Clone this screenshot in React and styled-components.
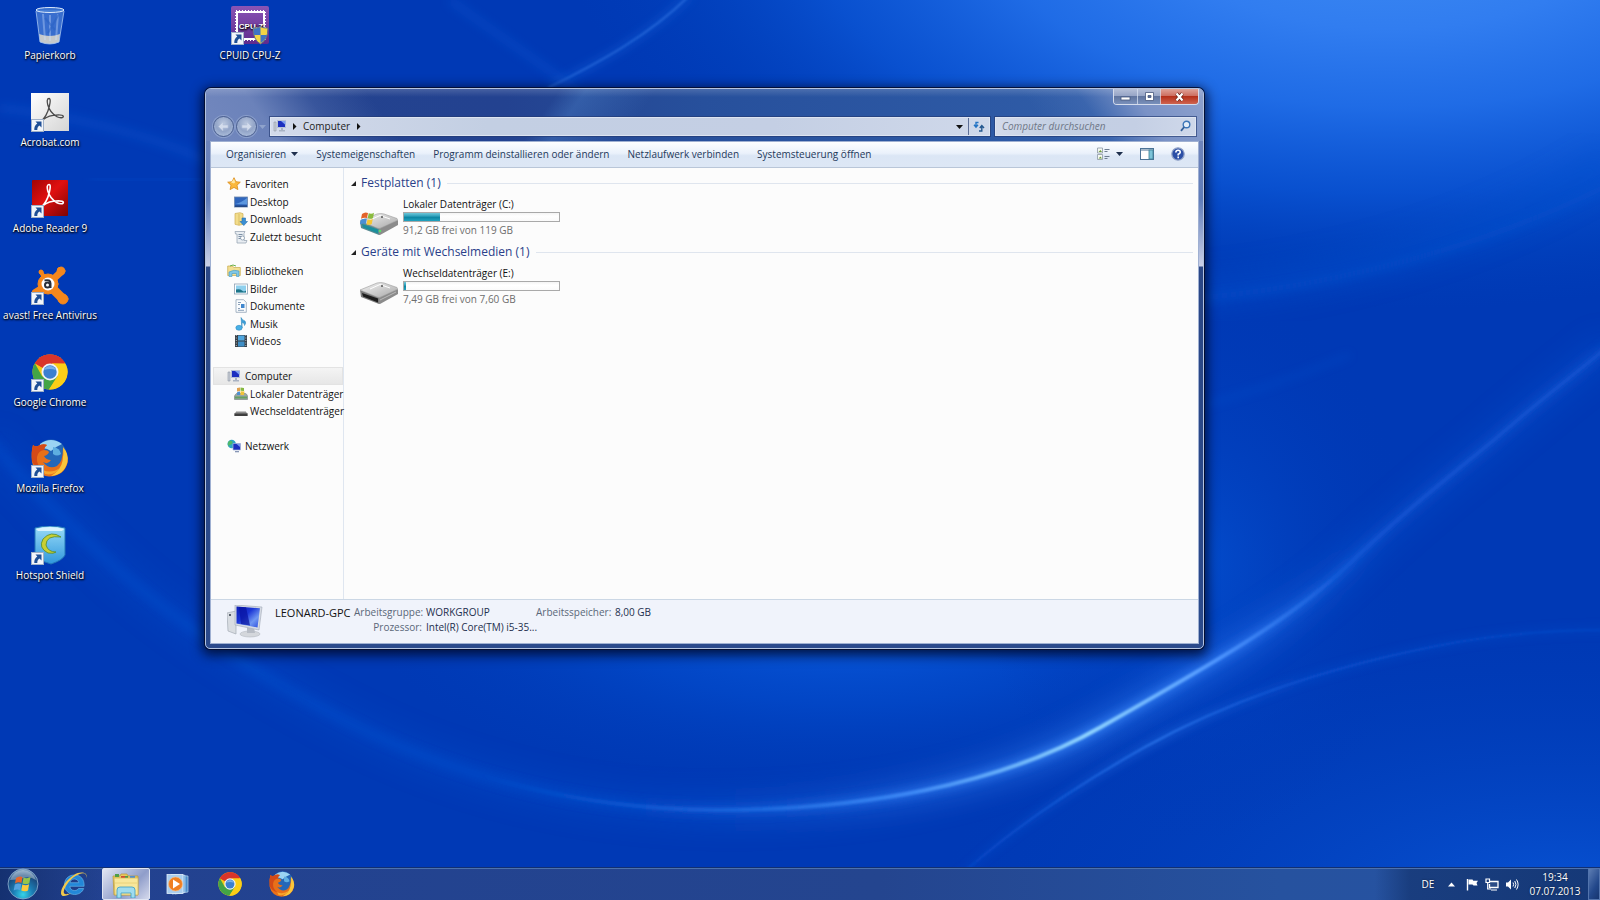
import React from "react";
import styled, { createGlobalStyle, css } from "styled-components";

const GlobalStyle = createGlobalStyle`
  *, *::before, *::after { box-sizing: border-box; }
  html, body { margin: 0; padding: 0; background: #0038b4; }
  body, button, input {
    font-family: "Open Sans", "Noto Sans", "Liberation Sans", sans-serif;
    font-size: 10px;
    line-height: 14px;
  }
  button { margin: 0; padding: 0; border: 0; background: none; color: inherit; cursor: default; }
  a { color: inherit; text-decoration: none; }
  ul, dl, dd, dt, h1, h2, p { margin: 0; padding: 0; list-style: none; font-weight: 400; }
  svg { display: block; flex: none; }
`;

/* ---------- page ---------- */

const Screen = styled.div`
  position: relative;
  isolation: isolate;
  display: grid;
  grid-template-rows: 1fr 33px;
  min-height: 100vh;
  overflow: hidden;
`;

const WallpaperArt = styled.svg`
  position: absolute;
  inset: 0;
  width: 100%;
  height: 100%;
  z-index: -1;
`;

const Desktop = styled.main`
  position: relative;
  display: grid;
`;

const IconGrid = styled.ul`
  display: grid;
  grid-template-rows: repeat(10, 1fr);
  grid-auto-columns: 100px;
`;

const IconCell = styled.li`
  grid-column: ${(p) => p.$col};
  grid-row: ${(p) => p.$row};
  display: flex;
  justify-content: center;
  align-items: flex-start;
  padding-top: 6px;
`;

const Shortcut = styled.button`
  display: flex;
  flex-direction: column;
  align-items: center;
  gap: 2px;
  color: #fff;
  line-height: 16px;
  white-space: nowrap;
  text-shadow: 0 1px 2px #000, 1px 1px 2px rgba(0, 0, 0, 0.8);
`;

/* ---------- window ---------- */

const Frame = styled.section`
  position: absolute;
  inset: 88px 396px 218px 205px;
  display: flex;
  flex-direction: column;
  padding: 0 4px 4px;
  border: 1px solid #b4c3df;
  border-radius: 6px 6px 5px 5px;
  background: linear-gradient(to bottom, #6f84b8 0, #6c83bb 60px, #5f7cb9 110px, #c9cfe6 177px, #2b4786 178px, #2b4a8c 100%);
  box-shadow: 0 0 0 1px rgba(3, 12, 44, 0.85), 0 3px 12px 3px rgba(0, 5, 30, 0.8);
`;

const TitleArea = styled.header`
  display: flex;
  flex-direction: column;
  height: 52px;
  margin: 0 -4px;
  padding: 0 4px 3px;
  border-radius: 5px 5px 0 0;
  background:
    linear-gradient(to bottom, rgba(255, 255, 255, 0.16), rgba(255, 255, 255, 0) 8px),
    linear-gradient(55deg, #7388be 0, #6b82ba 60px, rgba(70, 98, 165, 0.6) 110px, rgba(36, 67, 143, 0) 160px),
    linear-gradient(235deg, #8ea1cd 0, #7a92c6 60px, rgba(70, 110, 180, 0.5) 105px, rgba(50, 96, 171, 0) 150px),
    linear-gradient(125deg, rgba(70, 130, 200, 0) 290px, rgba(80, 135, 205, 0.35) 312px, rgba(60, 110, 190, 0) 370px),
    linear-gradient(to right, #24438f 0, #234290 30%, #27509c 50%, #3260ab 100%);
`;

const CaptionRow = styled.div`
  display: flex;
  justify-content: flex-end;
  align-items: flex-start;
  height: 25px;
`;

const Caption = styled.div`
  display: flex;
  height: 16px;
  border: 1px solid #d5dcec;
  border-top: 0;
  border-radius: 0 0 4px 4px;
  overflow: hidden;
`;

const CaptionButton = styled.button`
  display: grid;
  place-items: center;
  width: ${(p) => (p.$close ? 38 : 23)}px;
  border-left: 1px solid rgba(215, 224, 242, 0.75);
  background: linear-gradient(to bottom, #b5bfd8 0, #97a5c6 45%, #61759f 50%, #7990bb 100%);
  &:first-child { border-left: 0; }
  ${(p) =>
    p.$close &&
    css`
      background: linear-gradient(to bottom, #dfa398 0, #cd6f61 45%, #b5301a 50%, #cf6450 100%);
    `}
`;

const NavRow = styled.div`
  display: flex;
  align-items: center;
  gap: 5px;
  height: 24px;
  padding: 0 3px;
`;

const History = styled.div`
  display: flex;
  align-items: center;
  gap: 2px;
  width: 52px;
`;

const RoundButton = styled.button`
  display: grid;
  place-items: center;
  flex: none;
  width: 21px;
  height: 21px;
  border: 1px solid #4d6190;
  border-radius: 50%;
  background: radial-gradient(circle at 50% 35%, #bcc9df 0, #93a5c8 50%, #a9bbd9 80%, #8497bf 100%);
  box-shadow: 0 0 0 1px rgba(190, 205, 232, 0.35);
`;

const fieldSkin = css`
  display: flex;
  align-items: stretch;
  height: 19px;
  border: 1px solid #dde4f1;
  background: linear-gradient(to right, #d3daea, #c3cfe3 30%, #c4cfe4 70%, #cfd8ea);
  box-shadow: 0 0 0 1px rgba(35, 58, 115, 0.65);
`;

const AddressBar = styled.nav`
  ${fieldSkin}
  flex: 1;
  align-items: center;
  padding-left: 2px;
  color: #1b1b1b;
`;

const Crumb = styled.button`
  display: flex;
  align-items: center;
  gap: 5px;
  padding: 0 4px;
  color: #222;
`;

const AddressEnd = styled.button`
  display: grid;
  place-items: center;
  width: ${(p) => p.$w}px;
  height: 17px;
  ${(p) => p.$push && "margin-left: auto;"}
  ${(p) => p.$ruled && "border-left: 1px solid #5d6f97;"}
`;

const SearchBox = styled.label`
  ${fieldSkin}
  flex: 0 0 201px;
  align-items: center;
  padding: 0 4px 0 6px;
`;

const SearchInput = styled.input`
  flex: 1;
  min-width: 0;
  padding: 0;
  border: 0;
  outline: 0;
  background: transparent;
  font-style: italic;
  &::placeholder { color: #6f7787; opacity: 1; }
`;

const Client = styled.div`
  flex: 1;
  display: flex;
  flex-direction: column;
  min-height: 0;
  border: 1px solid #9fb0d2;
  background: #fcfcfc;
`;

const CommandBar = styled.div`
  display: flex;
  align-items: center;
  gap: 18px;
  height: 26px;
  padding: 0 13px 2px 15px;
  border-bottom: 1px solid #b9c6d8;
  background: linear-gradient(to bottom, #fdfeff 0, #eaf1fb 45%, #dbe6f5 55%, #dde7f5 100%);
  color: #1e395b;
  white-space: nowrap;
`;

const Command = styled.button`
  display: flex;
  align-items: center;
  gap: 5px;
`;

const CommandTools = styled.div`
  display: flex;
  align-items: center;
  gap: 17px;
  margin-left: auto;
`;

const Body = styled.div`
  flex: 1;
  display: flex;
  min-height: 0;
`;

/* ---------- navigation pane ---------- */

const Tree = styled.nav`
  display: flex;
  flex-direction: column;
  gap: 17px;
  flex: none;
  width: 133px;
  padding: 7px 0 0 2px;
  border-right: 1px solid #dfe6f0;
`;

const Branch = styled.ul`
  display: flex;
  flex-direction: column;
`;

const Leaf = styled.li`
  height: 17px;
  padding-left: ${(p) => (p.$root ? 14 : 21)}px;
  &:nth-child(odd) { height: 18px; }
  ${(p) =>
    p.$selected &&
    css`
      background: linear-gradient(to bottom, #f5f5f5, #e6e6e6);
      box-shadow: inset 0 0 0 1px #e3e3e3;
    `}
`;

const LeafLink = styled.a`
  display: flex;
  align-items: center;
  gap: ${(p) => (p.$root ? 4 : 2)}px;
  height: 100%;
  color: #111;
  white-space: nowrap;
`;

/* ---------- drive list ---------- */

const Content = styled.div`
  flex: 1;
  padding: 6px 5px 0 7px;
`;

const GroupHead = styled.h2`
  display: flex;
  align-items: center;
  gap: 6px;
  height: 18px;
  &::after {
    content: "";
    flex: 1;
    height: 1px;
    background: #dfe5ee;
  }
`;

const GroupToggle = styled.button`
  display: flex;
  align-items: center;
  gap: 3px;
  color: #2a3f8a;
  font-size: 12px;
  line-height: 18px;
`;

const Drive = styled.article`
  display: flex;
  align-items: flex-end;
  gap: 5px;
  padding: 5px 0 6px 9px;
`;

const DriveText = styled.div`
  display: flex;
  flex-direction: column;
  gap: 1px;
  width: 157px;
  color: #111;
  white-space: nowrap;
`;

const Meter = styled.div`
  height: 10px;
  border: 1px solid #a9a9a9;
  background: linear-gradient(to bottom, #f4f4f4, #fff 40%, #fafafa);
`;

const MeterFill = styled.div`
  height: 100%;
  background: linear-gradient(to bottom, #6ec6d8 0, #35a5bf 35%, #0d86a3 55%, #21a3bf 100%);
`;

const Muted = styled.p`
  color: #6d6d6d;
`;

/* ---------- details pane ---------- */

const Details = styled.footer`
  display: flex;
  gap: 12px;
  height: 44px;
  padding: 5px 16px 0;
  border-top: 1px solid #cbd7e5;
  background: #f0f3fb;
`;

const Facts = styled.dl`
  display: grid;
  grid-template-columns: 75px 68px 106px 75px auto;
  grid-template-rows: 15px 15px;
  column-gap: 4px;
  line-height: 15px;
  white-space: nowrap;
`;

const MachineName = styled.div`
  color: #111;
  font-size: 11px;
`;

const FactLabel = styled.dt`
  grid-column: ${(p) => p.$col};
  grid-row: ${(p) => p.$row};
  text-align: right;
  color: #5a6779;
`;

const FactValue = styled.dd`
  grid-column: ${(p) => p.$col};
  grid-row: ${(p) => p.$row};
  color: #1e2f4d;
`;

/* ---------- taskbar ---------- */

const Taskbar = styled.footer`
  display: flex;
  align-items: stretch;
  gap: 4px;
  border-top: 1px solid #123072;
  background:
    linear-gradient(to right, rgba(12, 38, 92, 0.6) 0, rgba(12, 38, 92, 0) 100px),
    linear-gradient(to left, rgba(18, 52, 112, 0.85) 0, rgba(22, 56, 118, 0.8) 190px, rgba(22, 56, 118, 0) 225px),
    linear-gradient(to right, #224190 0, #24458f 55%, #26529f 80%, #2653a3 100%);
  box-shadow: inset 0 1px 0 #4d72ae;
`;

const TaskButton = styled.button`
  display: grid;
  place-items: center;
  width: ${(p) => (p.$start ? 46 : 48)}px;
  ${(p) =>
    p.$active &&
    css`
      border: 1px solid #dfe5f3;
      border-radius: 2px;
      background: linear-gradient(135deg, #e2e6f2 0, #b0bbdb 35%, #8f9dca 60%, #d4d9ec 100%);
    `}
`;

const Tray = styled.div`
  display: flex;
  align-items: center;
  margin-left: auto;
  color: #fff;
`;

const TrayButton = styled.button`
  display: grid;
  place-items: center;
  width: ${(p) => p.$w}px;
  height: 28px;
  text-shadow: 0 0 2px rgba(0, 0, 0, 0.6);
`;

const ShowDesktop = styled.button`
  width: 12px;
  align-self: stretch;
  border: 1px solid #5274ad;
  background: linear-gradient(120deg, #5d7db3, #23488b 60%, #16356f);
`;

/* ---------- drawings ---------- */

const MAIN_ARC =
  "M-10 440 C40 500 70 525 115 567 C190 634 270 682 344 720 C430 765 560 810 718 810 C860 810 1000 785 1101 727 C1210 665 1290 620 1346 567 C1400 515 1445 480 1494 440 C1540 400 1570 378 1610 345";
const LOW_ARC = "M950 885 C1000 838 1060 795 1145 747 C1230 700 1330 665 1458 642 C1510 633 1560 630 1610 630";

function Wallpaper() {
  return (
    <WallpaperArt viewBox="0 0 1600 900" preserveAspectRatio="none" aria-hidden="true">
      <defs>
        <radialGradient id="sky" gradientUnits="userSpaceOnUse" cx="0" cy="0" r="1" gradientTransform="translate(1390 -80) scale(830 390)">
          <stop offset="0" stopColor="#3f8cf2" />
          <stop offset=".28" stopColor="#317df0" />
          <stop offset=".48" stopColor="#2270ea" stopOpacity=".92" />
          <stop offset=".7" stopColor="#0c58d8" stopOpacity=".75" />
          <stop offset=".86" stopColor="#0349c6" stopOpacity=".4" />
          <stop offset="1" stopColor="#0040bc" stopOpacity="0" />
        </radialGradient>
        <radialGradient id="pool" gradientUnits="userSpaceOnUse" cx="0" cy="0" r="1" gradientTransform="translate(850 620) scale(480 170)">
          <stop offset="0" stopColor="#0a5ade" />
          <stop offset=".5" stopColor="#034ed0" stopOpacity=".6" />
          <stop offset="1" stopColor="#0040bc" stopOpacity="0" />
        </radialGradient>
        <radialGradient id="corner" gradientUnits="userSpaceOnUse" cx="0" cy="0" r="1" gradientTransform="translate(1560 900) scale(620 260)">
          <stop offset="0" stopColor="#0853d4" />
          <stop offset="1" stopColor="#0040bc" stopOpacity="0" />
        </radialGradient>
        <radialGradient id="side" gradientUnits="userSpaceOnUse" cx="0" cy="0" r="1" gradientTransform="translate(1200 560) scale(220 280)">
          <stop offset="0" stopColor="#034bcb" />
          <stop offset="1" stopColor="#0038b6" stopOpacity="0" />
        </radialGradient>
        <linearGradient id="arcGlow" gradientUnits="userSpaceOnUse" x1="0" y1="0" x2="1600" y2="0">
          <stop offset="0" stopColor="#0754d4" stopOpacity=".5" />
          <stop offset=".4" stopColor="#0a58d8" stopOpacity=".6" />
          <stop offset=".56" stopColor="#2a74ec" />
          <stop offset=".68" stopColor="#3f8dff" />
          <stop offset=".78" stopColor="#2f78f2" />
          <stop offset=".87" stopColor="#0a58d8" stopOpacity=".7" />
          <stop offset="1" stopColor="#0a58d8" stopOpacity=".7" />
        </linearGradient>
        <linearGradient id="arcCore" gradientUnits="userSpaceOnUse" x1="0" y1="0" x2="1600" y2="0">
          <stop offset=".3" stopColor="#1562dc" stopOpacity="0" />
          <stop offset=".45" stopColor="#1b69e0" stopOpacity=".7" />
          <stop offset=".57" stopColor="#3d88f5" />
          <stop offset=".68" stopColor="#8fd4ff" />
          <stop offset=".76" stopColor="#4f96ff" />
          <stop offset=".84" stopColor="#1e66e4" stopOpacity=".3" />
          <stop offset="1" stopColor="#1562dc" stopOpacity=".3" />
        </linearGradient>
        <linearGradient id="lowCore" gradientUnits="userSpaceOnUse" x1="950" y1="0" x2="1600" y2="0">
          <stop offset="0" stopColor="#0e5ade" stopOpacity=".3" />
          <stop offset=".32" stopColor="#3380f5" />
          <stop offset=".55" stopColor="#1660e0" stopOpacity=".6" />
          <stop offset="1" stopColor="#0a54d2" stopOpacity=".5" />
        </linearGradient>
        <filter id="wide" x="-10%" y="-20%" width="120%" height="140%"><feGaussianBlur stdDeviation="14" /></filter>
        <filter id="mid" x="-10%" y="-20%" width="120%" height="140%"><feGaussianBlur stdDeviation="5" /></filter>
        <filter id="fine" x="-10%" y="-20%" width="120%" height="140%"><feGaussianBlur stdDeviation="1" /></filter>
      </defs>
      <rect width="1600" height="900" fill="#0039b5" />
      <rect width="1600" height="900" fill="url(#pool)" />
      <rect width="1600" height="900" fill="url(#corner)" />
      <rect width="1600" height="900" fill="url(#side)" />
      <rect width="1600" height="900" fill="url(#sky)" />
      <g fill="none">
        <path d="M1180 294 C1350 280 1500 232 1610 160" stroke="#0650cc" strokeWidth="26" opacity=".5" filter="url(#wide)" />
        <path d="M1180 300 C1350 286 1500 240 1610 184" stroke="#0a54d0" strokeWidth="7" opacity=".4" filter="url(#mid)" />
        <path d="M1200 406 C1260 390 1300 375 1350 355" stroke="#0a54d0" strokeWidth="4" opacity=".4" filter="url(#mid)" />
        <path d="M690 -5 C650 35 600 62 548 88" stroke="#1a66e0" strokeWidth="7" opacity=".4" filter="url(#mid)" />
        <path d="M690 -5 C650 35 600 62 548 88" stroke="#3c84ee" strokeWidth="2" opacity=".5" filter="url(#fine)" />
        <path d="M450 0 C490 30 530 55 590 100" stroke="#0e5ad6" strokeWidth="9" opacity=".3" filter="url(#mid)" />
        <path d="M0 108 C70 115 150 135 205 160" stroke="#0c58d2" strokeWidth="9" opacity=".35" filter="url(#mid)" />
        <path d="M90 179 L205 180" stroke="#0c58d2" strokeWidth="4" opacity=".4" filter="url(#mid)" />
        <path d={MAIN_ARC} stroke="url(#arcGlow)" strokeWidth="24" opacity=".5" filter="url(#wide)" />
        <path d={MAIN_ARC} stroke="url(#arcGlow)" strokeWidth="9" opacity=".7" filter="url(#mid)" />
        <path d={MAIN_ARC} stroke="url(#arcCore)" strokeWidth="4" filter="url(#fine)" />
        <path d={LOW_ARC} stroke="url(#lowCore)" strokeWidth="6" opacity=".5" filter="url(#mid)" />
        <path d={LOW_ARC} stroke="url(#lowCore)" strokeWidth="2" opacity=".8" filter="url(#fine)" />
      </g>
    </WallpaperArt>
  );
}

function LinkBadge() {
  return (
    <g>
      <rect x=".5" y="26.5" width="12" height="12" fill="#f2f5fa" stroke="#9fb0c8" />
      <path d="M4.500 28.500h6v6l-2-2c-1.500 1-2.300 2.300-2.200 4.500h-3c-.2-3 .8-5 3-6.600z" fill="#1f4f96" />
    </g>
  );
}

function Pict({ children, badge = true }) {
  return (
    <svg width="38" height="39" viewBox="0 0 38 39" aria-hidden="true">
      {children}
      {badge && <LinkBadge />}
    </svg>
  );
}

const BinIcon = () => (
  <Pict badge={false}>
    <path d="M5 4 L9 36 Q19 40 28 36 L33 4 Z" fill="#7fb0ee" fillOpacity=".45" />
    <path d="M8 28 L9 36 Q19 40 28 36 L29 28 Q19 32 8 28Z" fill="#d6d3cb" fillOpacity=".9" />
    <path d="M12 8 L14 34 M19 9V35 M27 8 L25 34" stroke="#cfe3ff" strokeWidth="2" strokeOpacity=".35" />
    <path d="M28 8 L17 27 M24 24 L14 12" stroke="#2b62c4" strokeWidth="2" strokeOpacity=".6" />
    <ellipse cx="19" cy="4" rx="14" ry="2.500" fill="#4f86d8" fillOpacity=".7" stroke="#dbe9fb" />
    <path d="M5 5 L9 36 Q19 40 28 36 L33 5" fill="none" stroke="#a9c8f2" strokeOpacity=".8" />
  </Pict>
);

const TRISKELE =
  "M18 5.500c-2 0-2.200 3-1.200 6.500C18.300 17.200 22 21.500 26 23.700c3 1.600 6.800 1.300 6.300-.4c-.5-1.500-6-1.500-10-1C17 23 12.500 25.500 9 29.500M18 5.500c1.800 0 1.300 4 .3 8C17 19 13.500 25.500 9.500 29";

const AcrobatIcon = () => (
  <Pict>
    <defs>
      <linearGradient id="paper" x1="0" y1="0" x2="1" y2="1">
        <stop offset="0" stopColor="#fff" /><stop offset="1" stopColor="#d5d5d5" />
      </linearGradient>
    </defs>
    <rect width="38" height="38" fill="url(#paper)" />
    <path d={TRISKELE} fill="none" stroke="#4c4c4c" strokeWidth="1.300" />
  </Pict>
);

const ReaderIcon = () => (
  <Pict>
    <defs>
      <linearGradient id="rd" x1="0" y1="0" x2="1" y2="1">
        <stop offset="0" stopColor="#a00505" /><stop offset=".45" stopColor="#e01010" /><stop offset="1" stopColor="#7d0404" />
      </linearGradient>
    </defs>
    <rect x="1" y="1" width="36" height="36" rx="1" fill="url(#rd)" />
    <path d={TRISKELE} fill="none" stroke="#fff" strokeWidth="1.600" />
  </Pict>
);

const AvastIcon = () => (
  <Pict>
    <g stroke="#f5871c" strokeLinecap="round" fill="#f5871c">
      <path d="M17 18 L30 6" strokeWidth="7" />
      <path d="M17 18 L10 6" strokeWidth="4" />
      <path d="M17 18 L32 33" strokeWidth="9" />
      <path d="M17 18 L4 26" strokeWidth="6" />
      <circle cx="30" cy="5" r="4" /><circle cx="10" cy="6" r="2" /><circle cx="32" cy="33" r="5" /><circle cx="17" cy="18" r="10" />
    </g>
    <circle cx="17" cy="18" r="6.500" fill="#fff" />
    <circle cx="16.500" cy="19" r="2.500" fill="none" stroke="#2a2f3a" strokeWidth="2" />
    <path d="M13.500 14.500q6-1.500 6 3v4.500" fill="none" stroke="#2a2f3a" strokeWidth="2" />
  </Pict>
);

function ChromeArt() {
  return (
    <g>
      <circle cx="18" cy="18" r="17.500" fill="#f6c915" />
      <path d="M18 18 L2.850 9.250 A17.500 17.500 0 0 1 33.150 9.250 Z" fill="#d9352a" />
      <path d="M18 9 H33.200 A17.500 17.500 0 0 0 3 9.250 L10.200 13.500 Z" fill="#d9352a" />
      <path d="M2.850 9.250 A17.500 17.500 0 0 0 17 35.500 L25.500 22 L10.200 22.500 Z" fill="#43a446" />
      <path d="M25.800 22.500 L17 35.500 A17.500 17.500 0 0 0 33.300 9.500 L20 9.200Z" fill="#fbce17" />
      <circle cx="18" cy="18" r="8.500" fill="#f1f3f5" />
      <circle cx="18" cy="18" r="6.700" fill="#3b7fd0" />
      <path d="M12 16a6.500 6.500 0 0 1 12 0q-6-2-12 0z" fill="#78b0ea" />
    </g>
  );
}

function FirefoxArt() {
  return (
    <g>
      <circle cx="20" cy="16" r="15.500" fill="#2467b8" />
      <path d="M9 5 Q20-3 31 5 Q24 8 20 12 Q14 8 9 10Z" fill="#9bd4f3" />
      <path d="M22 8q7 1 8 7q-4 3-8 0z" fill="#5eaee0" />
      <path d="M2 6 Q4 8 7 7 Q12 4 16 6 Q13 8 13 11 Q17 11 18 13 Q17 16 13 17 Q15 21 20 21 Q17 26 12 23 Q18 31 26 27 Q32 23 32 9 Q38 16 36.500 24 Q33 37 18 37.500 Q4 36 1 23 Q0 13 2 6Z" fill="#e8701a" />
      <path d="M32 8 Q38 15 36.500 23 Q33 36 20 37 Q30 31 31.500 22 Q33 15 32 8Z" fill="#f9c63c" />
      <path d="M12 31 Q20 35 29 29 Q24 37 14 35Z" fill="#f7a52c" />
      <path d="M2 6 Q4 8 7 7 Q12 4 16 6 Q13 8 13 11 Q7 12 6 18 Q5 26 12 31 Q4 29 1 22 Q0 13 2 6Z" fill="#d44a17" />
    </g>
  );
}

const ChromeIcon = () => <Pict><g transform="translate(1 1)"><ChromeArt /></g></Pict>;
const FirefoxIcon = () => <Pict><FirefoxArt /></Pict>;

const HotspotIcon = () => (
  <Pict>
    <defs>
      <linearGradient id="hs" x1="0" y1="0" x2="0" y2="1">
        <stop offset="0" stopColor="#9bdcf8" /><stop offset="1" stopColor="#2f97dc" />
      </linearGradient>
    </defs>
    <path d="M4 2 Q19-2 34 2 V29 Q32 34 20 38 Q6 34 4 28Z" fill="url(#hs)" stroke="#2377b8" />
    <path d="M5 3 Q19-1 33 3 L31 5 H7Z" fill="#d8f2fd" />
    <path d="M30 11 Q20 4 12 13 Q7 22 17 27 Q23 28 25 26 Q17 26 15 19 Q15 9 30 11Z" fill="#c9cf33" stroke="#538a2d" strokeWidth=".8" />
  </Pict>
);

const CpuzIcon = () => (
  <Pict>
    <defs>
      <linearGradient id="cz" x1="0" y1="0" x2="0" y2="1">
        <stop offset="0" stopColor="#8a55b5" /><stop offset="1" stopColor="#5f2a8d" />
      </linearGradient>
    </defs>
    <rect width="38" height="38" rx="2" fill="url(#cz)" />
    <rect x="6" y="6" width="27" height="27" fill="none" stroke="#fff" strokeWidth="2" />
    <rect x="5" y="5" width="29" height="29" fill="none" stroke="#fff" strokeWidth="2" strokeDasharray="1 2" />
    <text x="20" y="23" textAnchor="middle" fontFamily="Liberation Sans, sans-serif" fontSize="8" fontWeight="700" fill="#fff">CPU-Z</text>
    <path d="M22 22q7 0 7.500-2q.5 2 7.500 2q0 12-7.500 16q-7.500-4-7.500-16z" fill="#f4d545" stroke="#5b6b86" />
    <path d="M29.500 20.500q-.5 1.500-7 2q0 3 .7 6.500h6.300zM29.500 29v8q5-3 6.500-8z" fill="#3f74c4" />
  </Pict>
);

function SmallIcon({ children }) {
  return <svg width="14" height="14" viewBox="0 0 14 14" aria-hidden="true">{children}</svg>;
}

const PcSmall = () => (
  <SmallIcon>
    <path d="M1 3h2v9H1z" fill="#c9ced6" stroke="#8e97a6" strokeWidth=".6" />
    <path d="M4.500 1.500h8v7h-8z" fill="#1c2fc0" stroke="#b8c2d6" />
    <path d="M8 2h4.500v4z" fill="#7f9ff0" />
    <path d="M8 9h2v2h2v1.500H6V11h2z" fill="#a9b3c4" />
  </SmallIcon>
);
const StarSmall = () => (
  <SmallIcon><path d="M7 .7l1.900 4 4.400.5-3.300 3 .9 4.400L7 10.400 3.100 12.600 4 8.200.7 5.200l4.400-.5z" fill="#fbb83c" stroke="#d98a17" strokeWidth=".8" /><path d="M7 2l1.200 3.300L7 6.500 4 5.600z" fill="#ffe6a0" /></SmallIcon>
);
const DesktopSmall = () => (
  <SmallIcon><rect x=".5" y="2" width="13" height="10" fill="#2f66bd" stroke="#6d87ad" strokeWidth=".8" /><path d="M1 9q6-1 12-6v6.500z" fill="#5c97de" /><path d="M1 10.500h12v1.300H1z" fill="#1d3f7a" /></SmallIcon>
);
const DownloadSmall = () => (
  <SmallIcon><path d="M1 1.500l5-.8 3 1v10.600l-4 1-4-1z" fill="#f2dc8a" stroke="#cfae50" strokeWidth=".7" /><path d="M5 2v11" stroke="#d9bf66" /><path d="M8 6h3.500v3.500H13.500L9.800 13.500 6 9.500h2z" fill="#3a8fd4" stroke="#256fae" strokeWidth=".6" /></SmallIcon>
);
const RecentSmall = () => (
  <SmallIcon><path d="M1 1.500h10l-1 2v7h3l-1 2.500H3V4H1.500z" fill="#e8edf2" stroke="#9aa7b5" strokeWidth=".8" /><path d="M4.500 4.500h4M4.500 6.500h4M4.500 8.500h4" stroke="#7d90a6" /><circle cx="8.500" cy="8" r="2" fill="#fff" stroke="#7d90a6" strokeWidth=".7" /></SmallIcon>
);
const LibrarySmall = () => (
  <SmallIcon><path d="M.7 2h5l1 1.500h6.600v8H.7z" fill="#f3df92" stroke="#c7ab4c" strokeWidth=".7" /><path d="M3 2l3-1 3 1" stroke="#6bb04a" fill="none" /><path d="M2 12.500V8q5-3 10-1v5.500H9.500V9.500H5v3z" fill="#7fc7e6" stroke="#4398c2" strokeWidth=".6" /></SmallIcon>
);
const ImageSmall = () => (
  <SmallIcon><rect x=".5" y="2" width="13" height="10" fill="#fff" stroke="#8fa2b5" strokeWidth=".8" /><rect x="2" y="3.500" width="10" height="7" fill="#8fd0ee" /><path d="M2 7.500q4-1 6 1t4 0v2H2z" fill="#1c7488" /></SmallIcon>
);
const DocSmall = () => (
  <SmallIcon><path d="M2 .7h7.500l2.800 2.600v10H2z" fill="#fafcfe" stroke="#93a5b8" strokeWidth=".8" /><path d="M4 3.500h3M4 5.500h2M4 9.500h2M4 11.300h6" stroke="#8ba0b8" /><rect x="7" y="5" width="3.500" height="4" fill="#3f86cd" /></SmallIcon>
);
const MusicSmall = () => (
  <SmallIcon><path d="M7 .5q1 2.500 4 3.500q1.500 2-.5 4.500q.5-2.500-2.500-3v5.500z" fill="#3d9fd8" stroke="#2380b8" strokeWidth=".5" /><ellipse cx="5" cy="10.800" rx="3.200" ry="2.500" fill="#49b0e6" stroke="#2380b8" strokeWidth=".5" /></SmallIcon>
);
const VideoSmall = () => (
  <SmallIcon><rect x="1" y="1" width="12" height="12" fill="#3a4148" /><rect x="4" y="1.500" width="6.500" height="5" fill="#4fa6de" /><rect x="4" y="7.500" width="6.500" height="5" fill="#3e8ec6" /><path d="M2.300 1v12M11.800 1v12" stroke="#aeb7c0" strokeDasharray="1 1.500" /></SmallIcon>
);
const DiskSmall = () => (
  <SmallIcon><path d="M.5 9q1-2 2-2.500h9q1.500.5 2 2.500v3.500H.5z" fill="#9ca7a5" stroke="#6d7a7a" strokeWidth=".6" /><path d="M1 9.500h12v2H1z" fill="#4f9e46" fillOpacity=".7" /><path d="M3 1l3-.5v3.500L3 4.500z" fill="#e0a04e" /><path d="M6.500.5L10 1v3l-3.500-.3z" fill="#86b840" /><path d="M3.200 5L6 4.500V8H3z" fill="#4d8fd0" /><path d="M6.500 4.300l4 .2-.6 3.500H6.500z" fill="#f1c338" /></SmallIcon>
);
const RemovableSmall = () => (
  <SmallIcon><path d="M.5 9.500L3 7h8l2.500 2.500V12H.5z" fill="#8d8d8d" /><path d="M.5 9.500h13V12H.5z" fill="#3e3e3e" /><path d="M3 7h8l1 1H2z" fill="#c4c4c4" /></SmallIcon>
);
const NetSmall = () => (
  <SmallIcon><circle cx="4.700" cy="5" r="4.200" fill="#2fa6c4" /><path d="M2 2q3-1 3.500 1T3 6 2 8Q-.5 5 2 2z" fill="#4fb86a" /><path d="M6 4.500h7.500V11H6z" fill="#1c2fc0" stroke="#a9b8da" strokeWidth=".7" /><path d="M9.500 5H13v3z" fill="#7897ee" /><path d="M8 12h4v1.300H8z" fill="#8796b5" /></SmallIcon>
);

function DriveArt({ system }) {
  return (
    <svg width="38" height="28" viewBox="0 0 38 28" aria-hidden="true">
      <defs>
        <linearGradient id="lid" x1="0" y1="0" x2="1" y2="1">
          <stop offset="0" stopColor="#f4f4f4" /><stop offset="1" stopColor="#a8a8a8" />
        </linearGradient>
      </defs>
      <path d="M0 12 L19 19 V26 L1 19Z" fill={system ? "#5b8b92" : "#7b7b7b"} />
      <path d="M19 19 L38 11 V16 L20 26 L19 26Z" fill="#8b8b8b" />
      <path d="M0 12 L17 5 Q21 4 24 5 L37 9.500 Q38 10.500 37 11.500 L21 19 Q19 20 17 19Z" fill="url(#lid)" stroke="#9a9a9a" strokeWidth=".6" />
      <path d="M10 11 L20 6.500 L30 10" fill="none" stroke="#fff" />
      <circle cx="22" cy="8" r="1" fill="#555" />
      <path d="M2 15 L18 20.500 V24.500 L3 18.500Z" fill={system ? "#1b8e9c" : "#1d1d1d"} />
      {system ? (
        <g>
          <circle cx="20" cy="22" r="1.300" fill="#58e06a" />
          <path d="M2 5q3-2.500 6-1l-1 5q-3-1-6 .8z" fill="#e2622a" />
          <path d="M8.700 4.300q3 1.200 5.300-.6l-1 5.200q-2.500 1.500-5.300.4z" fill="#8abb3e" />
          <path d="M.8 10.700q3-1.700 6-.7l-1 5q-3-1-6 .6z" fill="#4a8fd4" />
          <path d="M7.500 10.200q3 1.200 5.300-.4l-1 5.200q-2.500 1.500-5.300.4z" fill="#f3c636" />
        </g>
      ) : (
        <path d="M20 22 L36 14" stroke="#b9b9b9" />
      )}
    </svg>
  );
}

const MachineArt = () => (
  <svg width="36" height="36" viewBox="0 0 36 36" aria-hidden="true">
    <defs>
      <linearGradient id="scr" x1="0" y1="0" x2="1" y2="1">
        <stop offset="0" stopColor="#0b1bb4" /><stop offset=".4" stopColor="#1c37d6" /><stop offset=".7" stopColor="#6f97f2" /><stop offset="1" stopColor="#2a4ade" />
      </linearGradient>
    </defs>
    <path d="M0 8 L9 6 V29 L1 26Z" fill="#d9dde2" stroke="#a5acb6" strokeWidth=".7" />
    <rect x="2" y="9" width="2" height="2" fill="#58606c" />
    <ellipse cx="23" cy="29" rx="10" ry="3" fill="#d4d7dc" stroke="#b4b9c1" strokeWidth=".6" />
    <path d="M20 22h7l1 6h-8z" fill="#b7bcc5" />
    <path d="M8 0 L35 2 L32 25 L8 20Z" fill="#d6dbe4" stroke="#9fa8b6" strokeWidth=".6" />
    <path d="M9.500 1.500 L33 3.300 L30.500 22.500 L9.500 18.500Z" fill="url(#scr)" />
    <path d="M12 2 L19 2.300 L23 20.500 L14 19Z" fill="#0712a0" fillOpacity=".7" />
  </svg>
);

const Triangle = ({ dir = "down", color = "#111" }) => (
  <svg width="7" height="7" viewBox="0 0 7 7" aria-hidden="true">
    <path
      d={dir === "down" ? "M0 2h7L3.500 6z" : dir === "right" ? "M2 0v7l3.500-3.500z" : dir === "up" ? "M0 5.500h7L3.500 1.500z" : "M5 1v5H0z"}
      fill={color}
    />
  </svg>
);

const FadedArrow = ({ flip }) => (
  <svg width="13" height="13" viewBox="0 0 13 13" aria-hidden="true">
    <path d={flip ? "M7 2l4.500 4.500L7 11V8H2V5h5z" : "M6 2L1.500 6.500 6 11V8h5V5H6z"} fill="#d3dcec" stroke="#b3c1da" strokeWidth=".6" />
  </svg>
);

const OrbArt = () => (
  <svg width="32" height="32" viewBox="0 0 32 32" aria-hidden="true">
    <defs>
      <radialGradient id="orb" cx=".5" cy=".85" r=".9">
        <stop offset="0" stopColor="#35d4e8" /><stop offset=".35" stopColor="#1b7fb6" /><stop offset=".7" stopColor="#1b4c80" /><stop offset="1" stopColor="#8fb2cf" />
      </radialGradient>
    </defs>
    <circle cx="16" cy="16" r="15" fill="url(#orb)" stroke="#8fb0d0" strokeWidth=".8" />
    <path d="M3 12q4-10 13-10t13 10q-6-4-13-2t-13 2z" fill="#fff" fillOpacity=".35" />
    <path d="M9 10q3-2.500 6.500-1l-1 6q-3-1.500-6.500.5z" fill="#e8652a" />
    <path d="M16.500 9.500q3.500 1.500 7-.5l-1.200 6.200q-3.300 1.700-6.800.2z" fill="#95c549" />
    <path d="M7.800 16.600q3.200-2 6.500-.6l-1.100 6.200q-3.200-1.600-6.500.4z" fill="#56a3e0" />
    <path d="M15.300 16.500q3.500 1.500 6.800-.2L21 22.400q-3.400 1.800-6.700.2z" fill="#fbc93a" />
  </svg>
);

const IeArt = () => (
  <svg width="28" height="27" viewBox="0 0 28 27" aria-hidden="true">
    <path d="M14.500 4C8 4 4.500 8.500 4.500 14S9 23.500 14.500 23.500c4.500 0 7.800-2.300 9.200-6h-5.200c-.8 1.300-2 2-4 2-2.700 0-4.500-1.600-4.600-4.200h14.200C24.500 8.500 21 4 14.500 4zM10 11.700C10.400 9.300 12 8 14.400 8s4 1.300 4.300 3.700z" fill="#2387d8" stroke="#6fbdf0" strokeWidth=".6" />
    <path d="M26.500 7C28 1 20 0 14 4 6 9 1 17 1 22 1 27 7 25 11 22 6 24 3.500 23.500 3.800 20.500 5 14 14 3 23 2.300c2.500 0 3.500 1.700 3.500 4.700z" fill="#f2c94c" />
  </svg>
);

const ExplorerArt = () => (
  <svg width="28" height="27" viewBox="0 0 28 27" aria-hidden="true">
    <path d="M1 5h7l1-2h6l1 2h10v19H2z" fill="#e9c95f" stroke="#b99735" strokeWidth=".7" />
    <path d="M3 3h4v3H3zM12 5h4v3h-4z" fill="#4f9e46" /><path d="M9 5h4v3H9z" fill="#d04a34" /><path d="M18 5h5v3h-5z" fill="#4f8fd0" />
    <path d="M2 7h24v17H3z" fill="#f8e79b" stroke="#d0b352" strokeWidth=".7" />
    <path d="M3 12h22" stroke="#ead27a" />
    <path d="M5 27v-8q0-3 3-3h12q3 0 3 3v8h-4v-5H9v5z" fill="#9fdcee" stroke="#3b9cc0" strokeWidth=".8" />
  </svg>
);

const MediaArt = () => (
  <svg width="24" height="24" viewBox="0 0 24 24" aria-hidden="true">
    <path d="M8 3l14 1v16L9 22z" fill="#4a8ccb" stroke="#b7d5ef" strokeWidth=".7" />
    <path d="M5 2.500l14 .8v17L6 22z" fill="#6ca9de" stroke="#c8e0f4" strokeWidth=".7" />
    <rect x="1" y="2.500" width="16" height="19" fill="#a8cdee" stroke="#e1eefa" strokeWidth=".8" />
    <circle cx="9.500" cy="12" r="7" fill="#ef7f22" stroke="#f9c08a" strokeWidth=".7" />
    <path d="M7 7.500v9l7-4.500z" fill="#fff" />
  </svg>
);

/* ---------- data ---------- */

const SHORTCUTS = [
  { label: "Papierkorb", Icon: BinIcon, col: 1, row: 1 },
  { label: "Acrobat.com", Icon: AcrobatIcon, col: 1, row: 2 },
  { label: "Adobe Reader 9", Icon: ReaderIcon, col: 1, row: 3 },
  { label: "avast! Free Antivirus", Icon: AvastIcon, col: 1, row: 4 },
  { label: "Google Chrome", Icon: ChromeIcon, col: 1, row: 5 },
  { label: "Mozilla Firefox", Icon: FirefoxIcon, col: 1, row: 6 },
  { label: "Hotspot Shield", Icon: HotspotIcon, col: 1, row: 7 },
  { label: "CPUID CPU-Z", Icon: CpuzIcon, col: 3, row: 1 },
];

const TREE = [
  [["Favoriten", StarSmall], ["Desktop", DesktopSmall], ["Downloads", DownloadSmall], ["Zuletzt besucht", RecentSmall]],
  [["Bibliotheken", LibrarySmall], ["Bilder", ImageSmall], ["Dokumente", DocSmall], ["Musik", MusicSmall], ["Videos", VideoSmall]],
  [["Computer", PcSmall], ["Lokaler Datenträger", DiskSmall], ["Wechseldatenträger", RemovableSmall]],
  [["Netzwerk", NetSmall]],
];

const GROUPS = [
  { title: "Festplatten (1)", name: "Lokaler Datenträger (C:)", used: 23, free: "91,2 GB frei von 119 GB", system: true },
  { title: "Geräte mit Wechselmedien (1)", name: "Wechseldatenträger (E:)", used: 1, free: "7,49 GB frei von 7,60 GB", system: false },
];

function ExplorerWindow() {
  return (
    <Frame aria-label="Computer">
      <TitleArea>
        <CaptionRow>
          <Caption>
            <CaptionButton aria-label="Minimieren">
              <svg width="11" height="9" viewBox="0 0 11 9"><rect x="1" y="5" width="9" height="3" fill="#fff" stroke="#47587e" strokeWidth=".8" /></svg>
            </CaptionButton>
            <CaptionButton aria-label="Maximieren">
              <svg width="11" height="9" viewBox="0 0 11 9"><path d="M1.500.5h8v8h-8z" fill="#fff" stroke="#47587e" strokeWidth=".8" /><path d="M4 3.500h3v2H4z" fill="#5a6e98" stroke="#47587e" strokeWidth=".8" /></svg>
            </CaptionButton>
            <CaptionButton $close aria-label="Schließen">
              <svg width="11" height="10" viewBox="0 0 11 10"><path d="M2.500 1.500l6 7M8.500 1.500l-6 7" stroke="#6b2418" strokeWidth="3.600" /><path d="M2.500 1.500l6 7M8.500 1.500l-6 7" stroke="#fff" strokeWidth="2.200" /></svg>
            </CaptionButton>
          </Caption>
        </CaptionRow>
        <NavRow>
          <History>
            <RoundButton aria-label="Zurück"><FadedArrow /></RoundButton>
            <RoundButton aria-label="Vorwärts"><FadedArrow flip /></RoundButton>
            <Triangle color="#8fa3cc" />
          </History>
          <AddressBar aria-label="Adresse">
            <PcSmall />
            <Crumb><Triangle dir="right" />Computer<Triangle dir="right" /></Crumb>
            <AddressEnd $w={18} $push aria-label="Vorherige Orte"><Triangle /></AddressEnd>
            <AddressEnd $w={21} $ruled aria-label="Aktualisieren">
              <svg width="12" height="12" viewBox="0 0 12 12"><path d="M5.500 2.500H3v4M1 4.800L3 7.200 5 4.800" fill="none" stroke="#2474c4" strokeWidth="1.400" /><path d="M6 11h2.800V6.500M6.800 8L8.800 5.500 11 8" fill="none" stroke="#24588f" strokeWidth="1.400" /></svg>
            </AddressEnd>
          </AddressBar>
          <SearchBox>
            <SearchInput type="text" placeholder="Computer durchsuchen" aria-label="Computer durchsuchen" />
            <svg width="11" height="12" viewBox="0 0 11 12" aria-hidden="true"><circle cx="6.500" cy="4.500" r="3.300" fill="#e3edf8" stroke="#3c76b8" strokeWidth="1.400" /><path d="M4.200 7L1 10.800" stroke="#33609a" strokeWidth="1.800" /></svg>
          </SearchBox>
        </NavRow>
      </TitleArea>

      <Client>
        <CommandBar>
          <Command>Organisieren<Triangle color="#1e2f4d" /></Command>
          <Command>Systemeigenschaften</Command>
          <Command>Programm deinstallieren oder ändern</Command>
          <Command>Netzlaufwerk verbinden</Command>
          <Command>Systemsteuerung öffnen</Command>
          <CommandTools>
            <Command aria-label="Ansicht ändern">
              <svg width="15" height="14" viewBox="0 0 15 14"><path d="M1.500 1h5v5h-5zM1.500 7.500h5v5h-5z" fill="#f5f8f2" stroke="#8b98a5" strokeWidth=".8" /><path d="M2.500 5l2-2 1.500 2zM2.500 11.500l2-2 1.500 2z" fill="#6e9b3d" /><path d="M8.500 2.500h5M8.500 4.500h3M8.500 9.500h5M8.500 11.500h3" stroke="#6d7d92" /></svg>
              <Triangle color="#1e2f4d" />
            </Command>
            <Command aria-label="Vorschaufenster">
              <svg width="14" height="14" viewBox="0 0 14 14"><rect x=".5" y="1.500" width="13" height="11" fill="#fff" stroke="#4c7396" /><path d="M1 3h12" stroke="#4c7396" /><rect x="9" y="3" width="4" height="9" fill="#7cc3d8" stroke="#3e8097" strokeWidth=".8" /></svg>
            </Command>
            <Command aria-label="Hilfe">
              <svg width="14" height="14" viewBox="0 0 14 14"><circle cx="7" cy="7" r="6.200" fill="#2c4fa6" stroke="#93a4c8" strokeWidth="1.200" /><path d="M4.800 5.500Q5 3.200 7.200 3.300 9.400 3.500 9.200 5.300 9 6.500 7.200 7.200V8.600M7.200 9.600v1.600" fill="none" stroke="#fff" strokeWidth="1.600" /></svg>
            </Command>
          </CommandTools>
        </CommandBar>

        <Body>
          <Tree aria-label="Navigation">
            {TREE.map((branch) => (
              <Branch key={branch[0][0]}>
                {branch.map(([label, Icon], i) => (
                  <Leaf key={label} $root={i === 0} $selected={label === "Computer"}>
                    <LeafLink href="#" $root={i === 0}><Icon />{label}</LeafLink>
                  </Leaf>
                ))}
              </Branch>
            ))}
          </Tree>
          <Content>
            {GROUPS.map((g) => (
              <section key={g.title}>
                <GroupHead><GroupToggle><Triangle dir="corner" color="#222" />{g.title}</GroupToggle></GroupHead>
                <Drive>
                  <DriveArt system={g.system} />
                  <DriveText>
                    <p>{g.name}</p>
                    <Meter role="progressbar" aria-valuenow={g.used} aria-label={g.name}>
                      <MeterFill style={{ width: `${g.used}%` }} />
                    </Meter>
                    <Muted>{g.free}</Muted>
                  </DriveText>
                </Drive>
              </section>
            ))}
          </Content>
        </Body>

        <Details>
          <MachineArt />
          <Facts>
            <MachineName>LEONARD-GPC</MachineName>
            <FactLabel $col={2} $row={1}>Arbeitsgruppe:</FactLabel>
            <FactValue $col={3} $row={1}>WORKGROUP</FactValue>
            <FactLabel $col={4} $row={1}>Arbeitsspeicher:</FactLabel>
            <FactValue $col={5} $row={1}>8,00 GB</FactValue>
            <FactLabel $col={2} $row={2}>Prozessor:</FactLabel>
            <FactValue $col={3} $row={2}>Intel(R) Core(TM) i5-35...</FactValue>
          </Facts>
        </Details>
      </Client>
    </Frame>
  );
}

export default function App() {
  return (
    <Screen>
      <GlobalStyle />
      <Wallpaper />
      <Desktop>
        <IconGrid>
          {SHORTCUTS.map(({ label, Icon, col, row }) => (
            <IconCell key={label} $col={col} $row={row}>
              <Shortcut><Icon />{label}</Shortcut>
            </IconCell>
          ))}
        </IconGrid>
        <ExplorerWindow />
      </Desktop>

      <Taskbar>
        <TaskButton $start aria-label="Start"><OrbArt /></TaskButton>
        <TaskButton aria-label="Internet Explorer"><IeArt /></TaskButton>
        <TaskButton $active aria-label="Windows-Explorer"><ExplorerArt /></TaskButton>
        <TaskButton aria-label="Windows Media Player"><MediaArt /></TaskButton>
        <TaskButton aria-label="Google Chrome"><svg width="24" height="24" viewBox="0 0 36 36"><ChromeArt /></svg></TaskButton>
        <TaskButton aria-label="Mozilla Firefox"><svg width="26" height="26" viewBox="0 0 38 38"><FirefoxArt /></svg></TaskButton>
        <Tray>
          <TrayButton $w={24}>DE</TrayButton>
          <TrayButton $w={22} aria-label="Ausgeblendete Symbole"><Triangle dir="up" color="#fff" /></TrayButton>
          <TrayButton $w={20} aria-label="Wartungscenter">
            <svg width="13" height="13" viewBox="0 0 13 13"><path d="M1.500 1v11.500" stroke="#fff" strokeWidth="1.400" /><path d="M2.500 1.500h4l.8 1.200H12L10.500 5l1 2.500h-4L6.500 6.500h-4z" fill="#fff" /></svg>
          </TrayButton>
          <TrayButton $w={20} aria-label="Netzwerk">
            <svg width="14" height="13" viewBox="0 0 14 13"><path d="M5 3.500h8v6H4.500V6" fill="#2b4c86" stroke="#fff" strokeWidth="1.300" /><path d="M1 1h3.500v3.500H1zM2.700 4.500V11H6M6 12h6" fill="none" stroke="#fff" strokeWidth="1.200" /></svg>
          </TrayButton>
          <TrayButton $w={20} aria-label="Lautstärke">
            <svg width="14" height="13" viewBox="0 0 14 13"><path d="M1 4.500h2L6 1.500v10L3 8.500H1z" fill="#fff" /><path d="M8 4.500q1.300 2 0 4M9.800 3q2.300 3.500 0 7M11.500 1.500q3.200 5 0 10" fill="none" stroke="#fff" /></svg>
          </TrayButton>
          <TrayButton $w={66}><time dateTime="2013-07-07T19:34">19:34<br />07.07.2013</time></TrayButton>
          <ShowDesktop aria-label="Desktop anzeigen" />
        </Tray>
      </Taskbar>
    </Screen>
  );
}
